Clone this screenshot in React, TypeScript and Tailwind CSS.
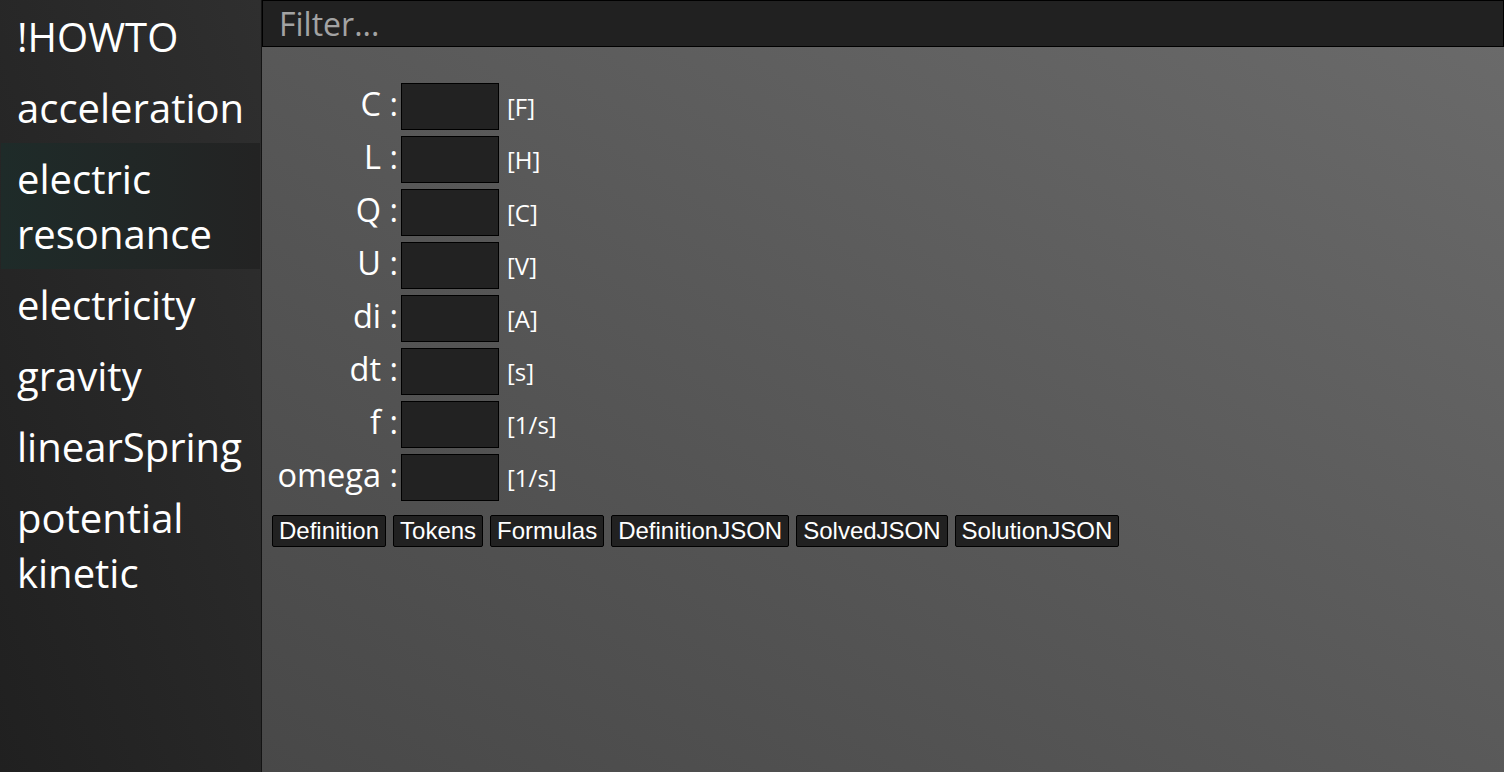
import React from "react";

const items: string[][] = [
  ["!HOWTO"],
  ["acceleration"],
  ["electric", "resonance"],
  ["electricity"],
  ["gravity"],
  ["linearSpring"],
  ["potential", "kinetic"],
];

const rows: [string, string][] = [
  ["C", "[F]"],
  ["L", "[H]"],
  ["Q", "[C]"],
  ["U", "[V]"],
  ["di", "[A]"],
  ["dt", "[s]"],
  ["f", "[1/s]"],
  ["omega", "[1/s]"],
];

const buttons = ["Definition", "Tokens", "Formulas", "DefinitionJSON", "SolvedJSON", "SolutionJSON"];

export default function App() {
  return (
    <div
      className="flex h-screen w-full overflow-hidden text-white"
      style={{ fontFamily: '"Open Sans", "DejaVu Sans", sans-serif' }}
    >
      <aside className="w-[262px] shrink-0 border-r border-[#141414] bg-linear-to-tr from-[#202020] to-[#2f2f2f] px-px pt-px">
        {items.map((lines, i) => (
          <div
            key={i}
            className={
              "px-[16px] py-2 text-[40px] leading-[55px] " +
              (i === 2 ? "bg-linear-to-r from-[#1e2b29] to-[#232323]" : "")
            }
          >
            {lines.map((l) => (
              <div key={l}>{l}</div>
            ))}
          </div>
        ))}
      </aside>
      <main className="flex min-w-0 flex-1 flex-col bg-linear-to-tr from-[#484848] to-[#6b6b6b]">
        <input
          className="h-[47px] w-full border border-black bg-[#212121] px-[16px] text-[32px] text-white outline-none placeholder:text-[#a3a3a3]"
          style={{ fontFamily: '"Open Sans", sans-serif' }}
          placeholder="Filter..."
        />
        <div className="flex flex-col gap-[6px] pl-[13px] pt-[36px]">
          {rows.map(([label, unit]) => (
            <div key={label} className="flex h-[47px] items-center">
              <div className="mb-[6px] w-[123px] text-right text-[32.5px] leading-[38px]">{label} :</div>
              <div className="ml-[3px] h-[47px] w-[98px] border border-black bg-[#222222]" />
              <div className="ml-[8px] text-[24px] leading-[33px]">{unit}</div>
            </div>
          ))}
        </div>
        <div
          className="mt-[14px] flex gap-[7px] pl-[10px]"
          style={{ fontFamily: '"Liberation Sans", Arial, sans-serif' }}
        >
          {buttons.map((b) => (
            <button
              key={b}
              className="rounded-[2px] border border-black bg-[#212121] px-[6px] py-px text-[24px] leading-[28px] text-white"
            >
              {b}
            </button>
          ))}
        </div>
      </main>
    </div>
  );
}
